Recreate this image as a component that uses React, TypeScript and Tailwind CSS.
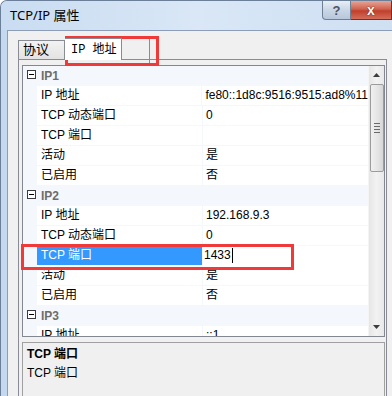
import React from "react";

type Row =
  | { cat: string }
  | { name: string; value: string; selected?: boolean };

const rows: Row[] = [
  { cat: "IP1" },
  { name: "IP 地址", value: "fe80::1d8c:9516:9515:ad8%11" },
  { name: "TCP 动态端口", value: "0" },
  { name: "TCP 端口", value: "" },
  { name: "活动", value: "是" },
  { name: "已启用", value: "否" },
  { cat: "IP2" },
  { name: "IP 地址", value: "192.168.9.3" },
  { name: "TCP 动态端口", value: "0" },
  { name: "TCP 端口", value: "1433", selected: true },
  { name: "活动", value: "是" },
  { name: "已启用", value: "否" },
  { cat: "IP3" },
  { name: "IP 地址", value: "::1" },
];

function Minus() {
  return (
    <div className="w-[9px] h-[9px] border border-[#3c3c3c] bg-white flex items-center justify-center">
      <div className="w-[5px] h-[1px] bg-[#000]" />
    </div>
  );
}

export default function App() {
  return (
    <div className="relative w-[392px] h-[396px] overflow-hidden bg-[#c4d8ef] font-['Liberation_Sans','Noto_Sans_CJK_SC',sans-serif] text-[12px] text-black rounded-tl-[7px] border-l border-t border-[#6b7f99]">
      {/* Title bar */}
      <div className="h-[29px] flex bg-[linear-gradient(90deg,#c9dcf1_0%,#d9e7f6_50%,#cfe0f3_100%)]">
        <div className="pl-[9px] pt-[5px] text-[13px] text-black leading-[18px] font-['Noto_Sans','Noto_Sans_CJK_SC',sans-serif]">TCP/IP 属性</div>
        <div className="flex-1" />
        <div className="flex items-start">
          <div className="w-[29px] h-[19px] border border-[#6f7f94] border-t-0 rounded-bl-[4px] bg-[linear-gradient(180deg,#e8eef6_0%,#c9d6e6_50%,#b7c7db_100%)] flex items-center justify-center text-[13px] font-bold text-[#4a5566] leading-none">
            ?
          </div>
          <div className="w-[41px] h-[19px] border border-[#7a2a2a] border-t-0 border-l-0 bg-[linear-gradient(180deg,#e7a597_0%,#d0624f_45%,#c0402c_55%,#d46d58_100%)] flex items-center justify-center text-[14px] font-bold text-white leading-none">
            <span className="[text-shadow:0_0_1px_#5a1a10,0_0_1px_#5a1a10]">x</span>
          </div>
        </div>
      </div>

      {/* Client area */}
      <div className="ml-[6px] h-[367px] bg-[#f0f0f0] border-l border-t border-[#8c9db5] flex flex-col">
        {/* Tabs */}
        <div className="h-[28px] flex items-end pl-[10px]">
          <div className="h-[19px] w-[47px] border border-[#898c95] border-b-0 bg-[linear-gradient(180deg,#f2f2f2_0%,#e3e3e3_100%)] flex items-center pl-[4px] font-['Liberation_Mono','Noto_Sans_CJK_SC',monospace] text-[13px] leading-none">
            协议
          </div>
          <div className="relative h-[22px] w-[57px] border border-[#898c95] border-b-0 border-l-0 bg-white flex items-center pl-[6px] font-['Liberation_Mono','Noto_Sans_CJK_SC',monospace] text-[12px] leading-none -mb-[1px] z-10">
            IP 地址
          </div>
        </div>

        {/* Tab pane */}
        <div className="ml-[10px] w-[369px] flex-1 border border-[#898c95] border-b-0 bg-[#f0f0f0] pl-[3px] pr-[1px] pt-[5px] flex flex-col">
          {/* Property grid */}
          <div className="h-[272px] border border-[#828790] bg-white flex">
            <div className="flex-1 overflow-hidden">
              {rows.map((r, i) =>
                "cat" in r ? (
                  <div key={i} className="h-[20px] flex bg-[#f4f7fc]">
                    <div className="w-[14px] flex items-start justify-center pt-[4px] pl-[2px]">
                      <Minus />
                    </div>
                    <div className="flex-1 pl-[4px] pt-[1px] font-bold text-[#6d6d6d] leading-[18px]">
                      {r.cat}
                    </div>
                  </div>
                ) : (
                  <div key={i} className="h-[20px] flex">
                    <div className="w-[14px] bg-[#f4f7fc]" />
                    <div
                      className={
                        r.selected
                          ? "w-[166px] h-[19px] bg-[#3399ff] text-white pl-[4px] leading-[19px] border-r border-[#f4f7fc]"
                          : "w-[166px] h-[20px] pl-[4px] leading-[19px] border-r border-b border-[#f4f7fc]"
                      }
                    >
                      {r.name}
                    </div>
                    <div
                      className={
                        r.selected
                          ? "flex-1 h-[20px] pl-[1px] leading-[19px] flex items-start"
                          : "flex-1 h-[20px] pl-[3px] leading-[19px] border-b border-[#f4f7fc]"
                      }
                    >
                      {r.value}
                      {r.selected && <span className="inline-block w-[1px] h-[15px] bg-black mt-[2px] ml-[1px]" />}
                    </div>
                  </div>
                )
              )}
            </div>
            {/* Scrollbar */}
            <div className="w-[16px] bg-[linear-gradient(90deg,#e6e6e6_0%,#f2f2f2_50%,#e8e8e8_100%)] flex flex-col items-center border-l border-[#f4f4f4]">
              <div className="h-[18px] flex items-center justify-center">
                <svg width="7" height="4" viewBox="0 0 7 4">
                  <path d="M0 4 L3.5 0 L7 4 Z" fill="#3c3c3c" />
                </svg>
              </div>
              <div className="w-[14px] h-[88px] rounded-[2px] border border-[#9c9c9c] bg-[linear-gradient(90deg,#f0f0f0_0%,#e6e6e6_50%,#d6d6d6_100%)] flex flex-col items-center justify-center gap-[2px]">
                <div className="w-[6px] h-[1px] bg-[#6a6a6a]" />
                <div className="w-[6px] h-[1px] bg-[#6a6a6a]" />
                <div className="w-[6px] h-[1px] bg-[#6a6a6a]" />
                <div className="w-[6px] h-[1px] bg-[#6a6a6a]" />
              </div>
              <div className="flex-1" />
              <div className="h-[18px] flex items-center justify-center">
                <svg width="7" height="4" viewBox="0 0 7 4">
                  <path d="M0 0 L7 0 L3.5 4 Z" fill="#3c3c3c" />
                </svg>
              </div>
            </div>
          </div>

          {/* Description panel */}
          <div className="mt-[5px] flex-1 border border-[#a0a0a0] border-b-0 bg-[#f0f0f0] pl-[4px] pt-[2px]">
            <div className="font-bold leading-[18px]">TCP 端口</div>
            <div className="mt-[1px] leading-[18px]">TCP 端口</div>
          </div>
        </div>
      </div>

      {/* Overlays: annotation boxes */}
      <div className="absolute left-[148px] top-[37px] w-[1px] h-[26px] bg-[#898c95]" />
      <div className="absolute left-[64px] top-[35px] w-[94px] h-[30px] border-[3px] border-[#f03a3a]" />
      <div className="absolute left-[20px] top-[243px] w-[273px] h-[26px] border-[3px] border-[#f03a3a]" />
    </div>
  );
}
